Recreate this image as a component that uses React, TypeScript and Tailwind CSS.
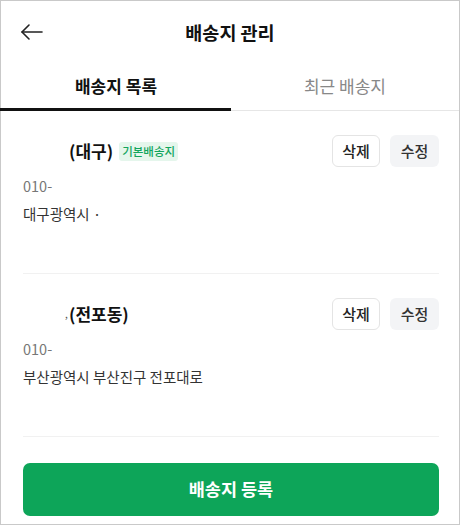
import React from "react";

const font = { fontFamily: '"Noto Sans CJK KR", "Noto Sans", sans-serif' };

type Address = {
  prefix?: string;
  title: string;
  isDefault?: boolean;
  phone: string;
  address: string;
};

const addresses: Address[] = [
  { title: "(대구)", isDefault: true, phone: "010-", address: "대구광역시 ·" },
  { prefix: ",", title: "(전포동)", phone: "010-", address: "부산광역시 부산진구 전포대로" },
];

function BackArrow() {
  return (
    <svg width="24" height="18" viewBox="0 0 24 18" fill="none" stroke="#222" strokeWidth="1.6" strokeLinecap="round" strokeLinejoin="round">
      <path d="M22 9H2" />
      <path d="M9 2L2 9L9 16" />
    </svg>
  );
}

function AddressCard({ item }: { item: Address }) {
  return (
    <div className="ml-[22px] mr-[20px] border-b border-[#f1f1f1] pt-[24px] pb-[49px]">
      <div className="flex items-center justify-between">
        <div className="flex items-center gap-[6px] pl-[46px]">
          <span className="relative text-[17px] font-bold text-[#111] leading-[20px]">
            {item.prefix && (
              <span className="absolute left-[-4px] top-0 text-[10px] font-normal text-[#555]">{item.prefix}</span>
            )}
            {item.title}
          </span>
          {item.isDefault && (
            <span className="rounded-[3px] bg-[#e5f6ec] px-[3px] text-[11.5px] font-medium leading-[19px] text-[#12a55c]">
              기본배송지
            </span>
          )}
        </div>
        <div className="flex items-center gap-[10px]">
          <button className="h-[32px] w-[48px] rounded-[6px] border border-[#e4e4e4] bg-white text-[15px] font-medium text-[#222]">
            삭제
          </button>
          <button className="h-[32px] w-[49px] rounded-[6px] bg-[#f3f4f6] text-[15px] font-medium text-[#333]">
            수정
          </button>
        </div>
      </div>
      <div className="mt-[9px] text-[14.5px] leading-[20px] text-[#777]">{item.phone}</div>
      <div className="mt-[8px] text-[14.5px] leading-[20px] text-[#333]">{item.address}</div>
    </div>
  );
}

export default function App() {
  return (
    <div style={font} className="flex h-[525px] w-[460px] flex-col border border-[#c9c9c9] bg-white">
      <header className="relative flex h-[63px] items-center justify-center">
        <button className="absolute left-[19px] top-[22px]">
          <BackArrow />
        </button>
        <h1 className="text-[18.5px] font-bold text-[#111]">배송지 관리</h1>
      </header>
      <nav className="flex h-[47px] border-b border-[#e6e6e6]">
        <div className="relative flex w-[230px] items-center justify-center pb-[2px]">
          <span className="text-[17px] font-bold text-[#111]">배송지 목록</span>
          <div className="absolute bottom-[-1px] left-[-1px] right-0 h-[3px] bg-[#111]" />
        </div>
        <div className="flex flex-1 items-center justify-center pb-[2px]">
          <span className="text-[17px] text-[#888]">최근 배송지</span>
        </div>
      </nav>
      <div className="flex flex-col">
        {addresses.map((a, i) => (
          <AddressCard key={i} item={a} />
        ))}
      </div>
      <div className="pl-[22px] pr-[20px] pt-[26px]">
        <button className="flex h-[53px] w-full items-center justify-center rounded-[7px] bg-[#0da559] text-[17.5px] font-bold text-white">
          배송지 등록
        </button>
      </div>
    </div>
  );
}
